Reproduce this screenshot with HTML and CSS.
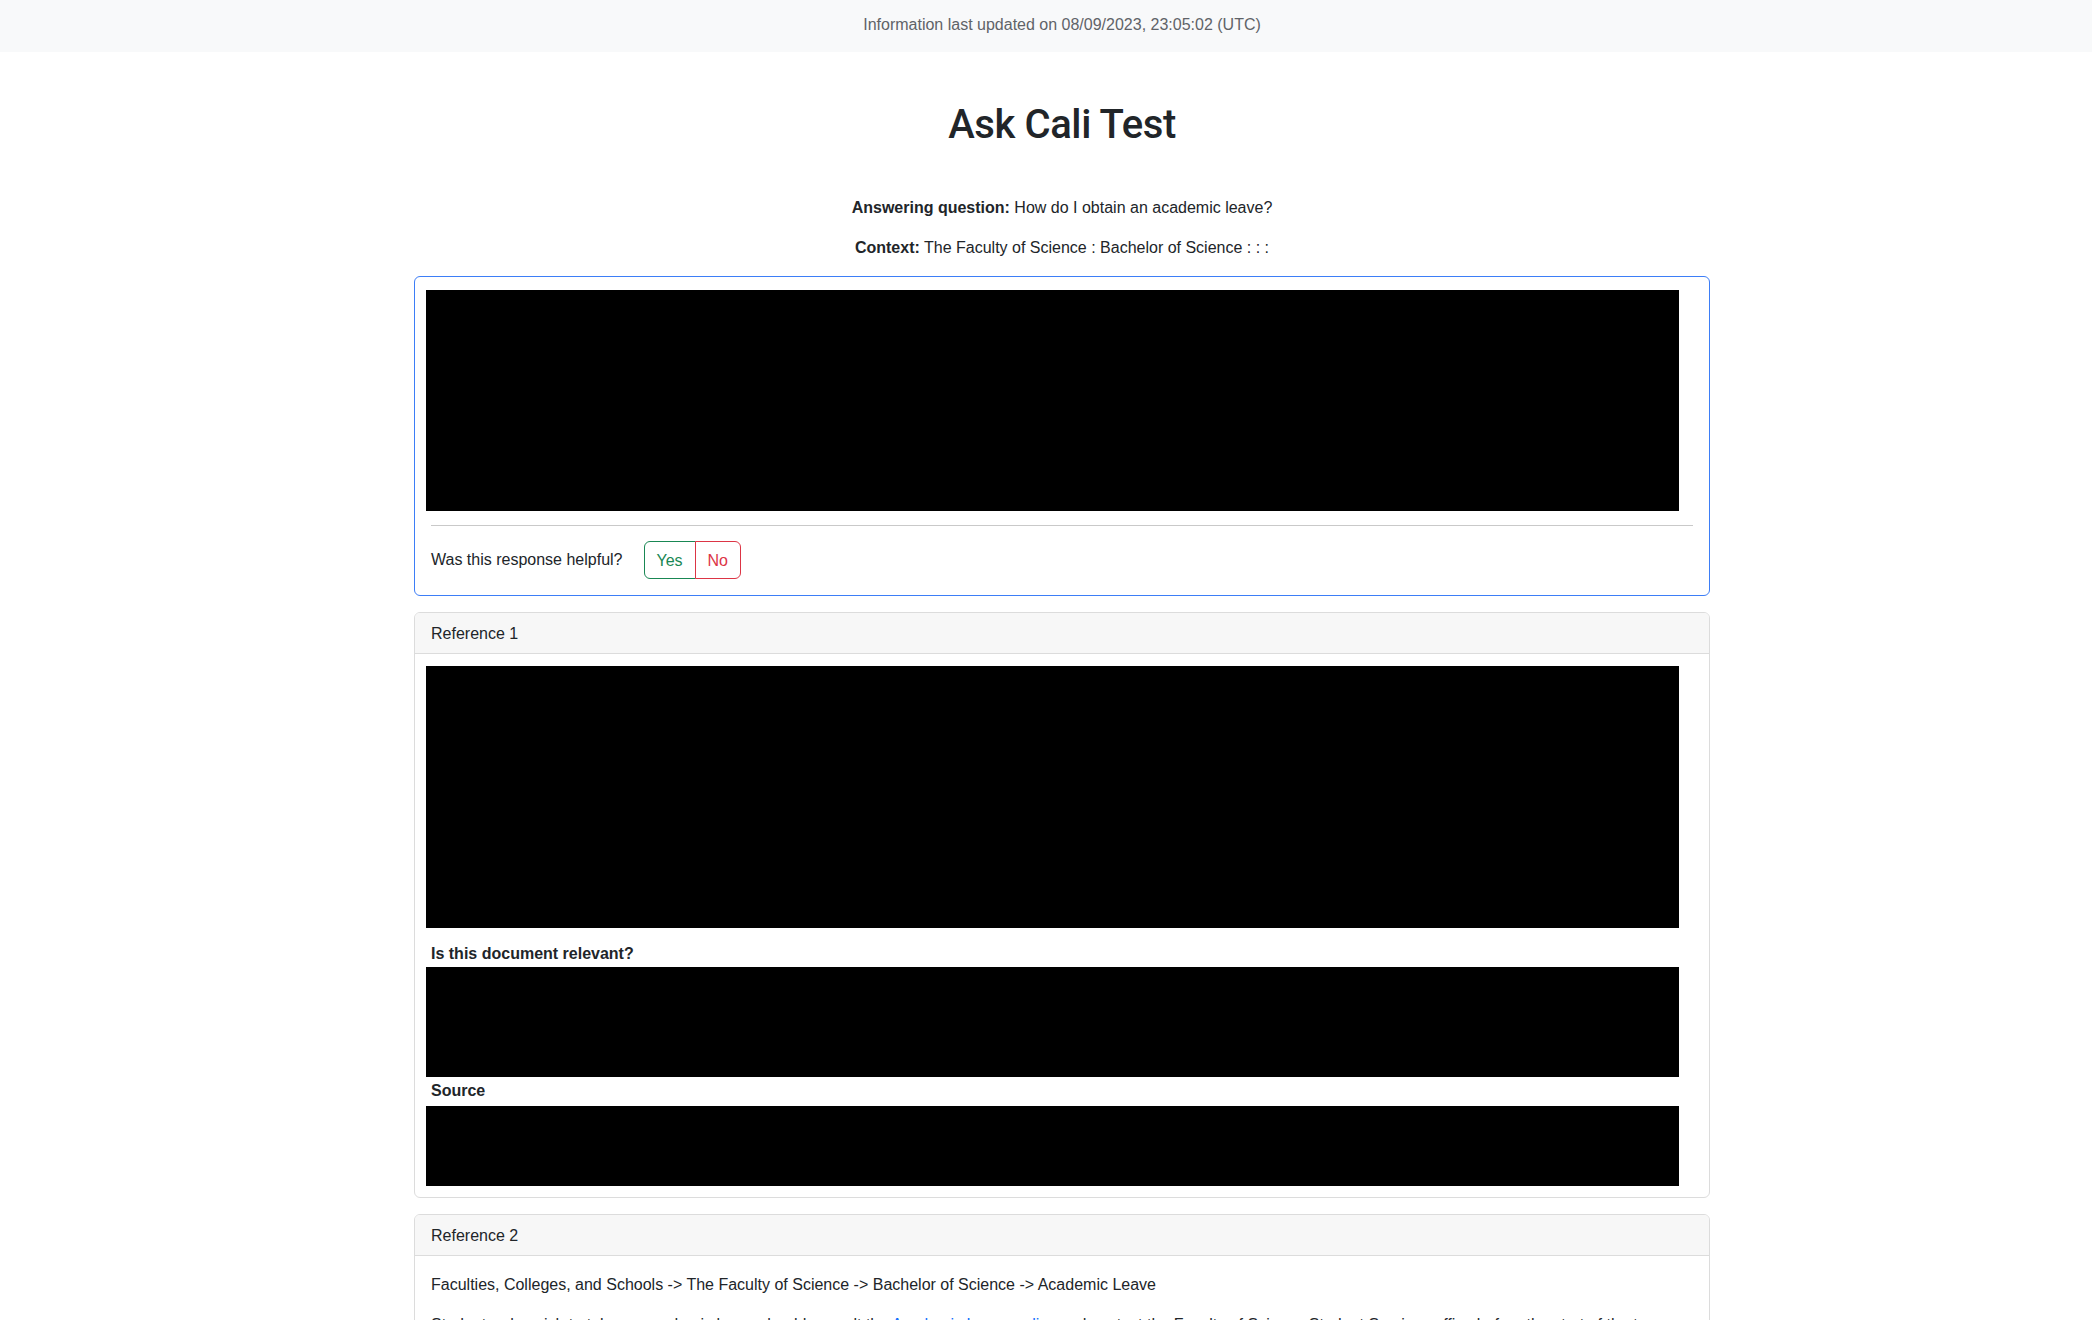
FILE: index.html
```html
<!DOCTYPE html>
<html lang="en">
<head>
<meta charset="utf-8">
<title>Ask Cali Test</title>
<link rel="stylesheet" href="styles.css">
</head>
<body>
<header class="topbar">
  <div class="topbar-inner">Information last updated on 08/09/2023, 23:05:02 (UTC)</div>
</header>
<main class="page">
  <div class="container">
    <h1 class="title">Ask Cali Test</h1>
    <p class="meta"><strong>Answering question:</strong> How do I obtain an academic leave?</p>
    <p class="meta"><strong>Context:</strong> The Faculty of Science : Bachelor of Science : : :</p>

    <section class="card card-primary">
      <div class="card-body answer-body">
        <div class="redacted redacted-answer"></div>
        <hr class="divider">
        <div class="feedback">
          <span class="feedback-label">Was this response helpful?</span>
          <div class="btn-group">
            <button class="btn btn-yes" type="button">Yes</button>
            <button class="btn btn-no" type="button">No</button>
          </div>
        </div>
      </div>
    </section>

    <section class="card">
      <div class="card-header">Reference 1</div>
      <div class="card-body ref-body">
        <div class="redacted redacted-doc"></div>
        <div class="label label-relevant">Is this document relevant?</div>
        <div class="redacted redacted-relevant"></div>
        <div class="label label-source">Source</div>
        <div class="redacted redacted-source"></div>
      </div>
    </section>

    <section class="card">
      <div class="card-header">Reference 2</div>
      <div class="card-body">
        <p class="ref-path">Faculties, Colleges, and Schools -&gt; The Faculty of Science -&gt; Bachelor of Science -&gt; Academic Leave</p>
        <p class="ref-text">Students who wish to take an academic leave should consult the <a href="#">Academic Leave policy</a> and contact the Faculty of Science Student Services office before the start of the term.</p>
      </div>
    </section>
  </div>
</main>
</body>
</html>
```

FILE: styles.css
```css
* { box-sizing: border-box; }

html, body {
  margin: 0;
  padding: 0;
  background: #ffffff;
  color: #212529;
  font-family: "Liberation Sans", Arial, sans-serif;
  font-size: 16px;
  line-height: 24px;
}

.topbar {
  background: #f8f9fa;
  height: 52px;
  padding: 13px 0 15px 32px;
}

.topbar-inner {
  text-align: center;
  color: #5f6368;
  font-size: 16px;
  line-height: 24px;
}

.page {
  padding-left: 32px;
}

.container {
  max-width: 1296px;
  margin: 0 auto;
}

.title {
  font-family: Roboto, "Liberation Sans", sans-serif;
  font-weight: 500;
  font-size: 40px;
  line-height: 48px;
  letter-spacing: -0.4px;
  text-align: center;
  margin: 49px 0 47px;
  color: #212529;
}

.meta {
  text-align: center;
  margin: 0 0 16px;
}

.meta strong { font-weight: 700; }

.card {
  border: 1px solid #dcdcdc;
  border-radius: 6px;
  margin-bottom: 16px;
  background: #fff;
  overflow: hidden;
}

.card-primary {
  border-color: #3d7ef7;
}

.card-header {
  background: #f7f7f7;
  border-bottom: 1px solid #dcdcdc;
  padding: 9px 16px 7px;
  line-height: 24px;
}

.card-body {
  padding: 16px;
  display: flex;
  flex-direction: column;
}

.redacted {
  background: #000;
  margin-left: -5px;
  margin-right: 14px;
}

.redacted-answer {
  margin-top: -3px;
  height: 221px;
}

.divider {
  border: 0;
  border-top: 1px solid #c9c9c9;
  margin: 14px 0 15px;
  width: 100%;
}

.feedback {
  display: flex;
  align-items: center;
  gap: 21px;
}

.feedback-label { line-height: 24px; }

.btn-group {
  display: flex;
}

.btn {
  font-family: "Liberation Sans", Arial, sans-serif;
  font-size: 16px;
  line-height: 24px;
  padding: 7px 12px 5px;
  background: #fff;
  border: 1px solid;
  cursor: pointer;
  margin: 0;
}

.btn-yes {
  color: #198754;
  border-color: #198754;
  border-radius: 6px 0 0 6px;
  width: 52px;
}

.btn-no {
  color: #dc3545;
  border-color: #dc3545;
  border-radius: 0 6px 6px 0;
  width: 46px;
  margin-left: -1px;
}

.redacted-doc {
  margin-top: -4px;
  height: 262px;
}

.label {
  font-weight: 700;
  line-height: 24px;
}

.label-relevant { margin-top: 14px; }

.redacted-relevant {
  margin-top: 1px;
  height: 110px;
}

.label-source { margin-top: 2px; }

.redacted-source {
  margin-top: 3px;
  height: 80px;
  margin-bottom: -5px;
}

.ref-path {
  margin: 1px 0 16px;
}

.ref-text {
  margin: 0;
}

.ref-text a {
  color: #0d6efd;
}
```
